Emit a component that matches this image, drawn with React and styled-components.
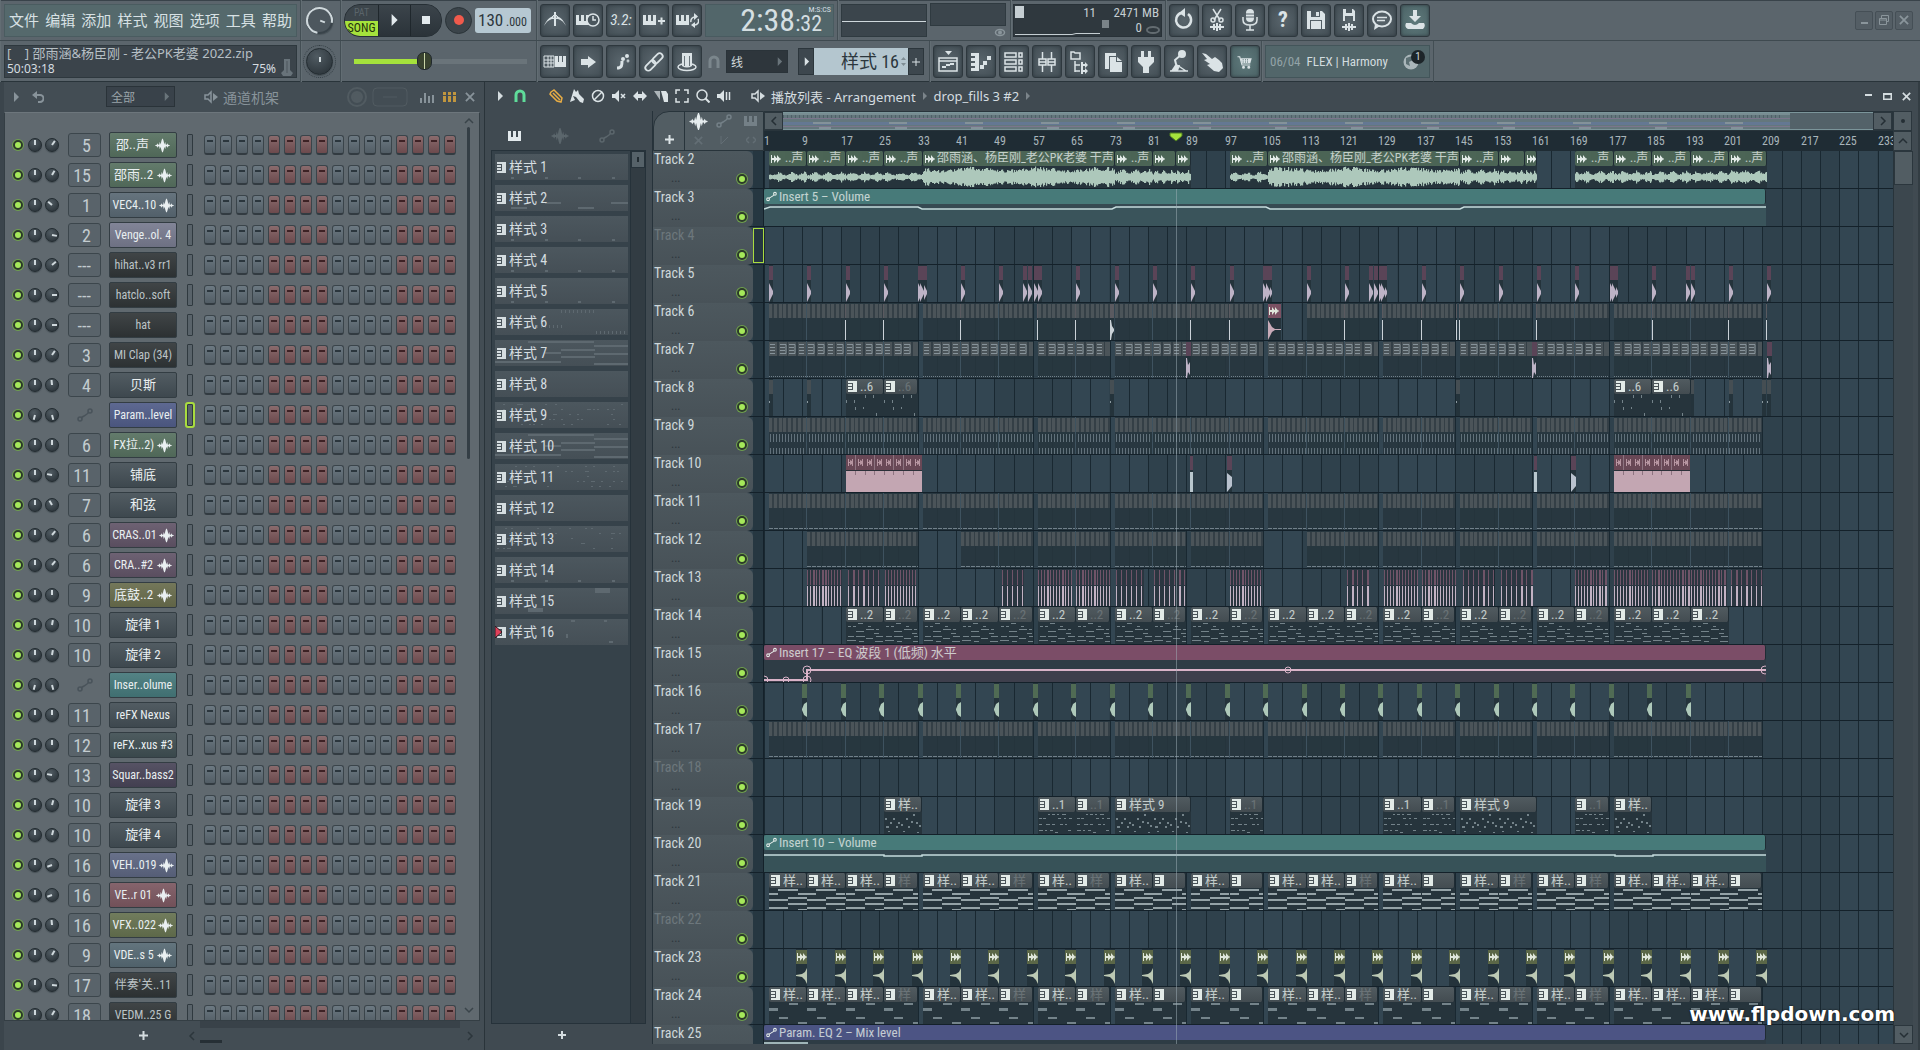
import React from "react";
import styled, { createGlobalStyle, css } from "styled-components";

const NARROW = '"Liberation Sans Narrow", "Roboto Condensed", Roboto, "Noto Sans CJK SC", sans-serif';
const SANS = '"Noto Sans", "Noto Sans CJK SC", sans-serif';

const Global = createGlobalStyle`
  * { box-sizing: border-box; }
  body { margin: 0; background: #3e484f; color: #cfd8dc; font-family: ${SANS}; font-size: 13px; overflow: hidden; }
  button, input, select { font: inherit; color: inherit; margin: 0; padding: 0; border: 0; background: none; border-radius: 0; }
  svg { display: block; flex: none; }
`;

/* ---------- icons ---------- */
const PIANO = "M0 0h3v6h2V0h3v6h2V0h3v10H0z";
const WAVE = "M0 5.4L2 5l1-2 1 2h1l1-4 1 3.500L8 0l1-3h1l1 3 1 4.500L13 1l1 4h1l1-2 1 2 2 .4v1.200L17 7l-1 2-1-2h-1l-1 4-1-3.500L11 12l-1 3H9l-1-3-1-4.500L6 11 5 7H4L3 9 2 7 0 6.600z";
const Svg = ({ w = 24, h = w, vb, children, ...p }) => (
  <svg width={w} height={h} viewBox={vb || `0 0 ${w} ${h}`} fill="none" stroke="currentColor" strokeWidth="2" aria-hidden="true" {...p}>{children}</svg>
);
const F = (p) => <path fill="currentColor" stroke="none" {...p} />;
const WaveIcon = ({ w = 18 }) => <Svg w={w} h={w} vb="0 -4 19 20"><F d={WAVE} /></Svg>;
const LineIcon = ({ w = 16 }) => (
  <Svg w={w} h={w} vb="0 0 16 16" strokeWidth="1.5"><circle cx="3" cy="12" r="2" /><circle cx="13" cy="4" r="2" /><path d="M4.500 10.500 7 9l3-2 1.500-1.500" /></Svg>
);
const PianoIcon = () => <Svg w={13} h={10}><F d={PIANO} /></Svg>;
const KeysIcon = ({ dim }) => (
  <Svg w={9} h={11} vb="0 0 9 11" style={{ opacity: dim ? 0.4 : 1 }}><F d="M5 0h4v11H5zM0 0h5v2H0zM0 3h4v2H0zM0 6h4v2H0zM0 9h5v2H0z" /></Svg>
);
const PLUG = "M0 0h1v3h2V0l2.500 3H6V0l3 3.500h1v1H9L6 8V5h-.5L3 8V5H1v3H0z";
const PlugIcon = () => <Svg w={10} h={8}><F d={PLUG} /></Svg>;
const Tri = ({ s = 8 }) => <Svg w={s} h={s + 2} vb="0 0 8 10"><F d="M2 0l5 5-5 5z" /></Svg>;
const Speaker = () => <Svg w={14} h={14} strokeWidth="1.500"><path d="M1 5h3l3-3v10L4 9H1z" /><F d="M9 3l5 4-5 4z" /></Svg>;
const Chevron = ({ d = "up" }) => (
  <Svg w={12} h={12} strokeWidth="1.500" style={{ rotate: { up: "0deg", down: "180deg", left: "-90deg", right: "90deg" }[d] }}><path d="M2 8l4-4 4 4" /></Svg>
);
const CloseX = ({ w = 11 }) => <Svg w={w} h={w} vb="0 0 11 11"><path d="M1 1l9 9M10 1l-9 9" /></Svg>;
const MagnetIcon = ({ w = 14 }) => <Svg w={w} h={w} vb="0 0 14 14" strokeWidth="3"><path d="M3 13V6a4 4 0 0 1 8 0v7" /></Svg>;

const ICONS = {
  metronome: <><F d="M1 18c3-7 6-9 10-10l-1 3c-3 0-6 2-9 7zM23 18c-3-7-6-9-10-10l1 3c3 0 6 2 9 7zM11 4h2v14h-2z" /><path d="M9 9l3-3 3 3-3 3z" strokeWidth="1" /></>,
  wait: <><F d={PIANO} transform="translate(0 7)" /><circle cx="17" cy="12" r="6" strokeWidth="1.500" fill="#4a565d" /><path d="M17 8v4h3" strokeWidth="1.500" /></>,
  pianoPlus: <><F d={PIANO} transform="translate(1 7)" /><path d="M16 13h7M19.500 9.500v7" /></>,
  pianoLoop: <><F d={PIANO} transform="translate(1 7)" /><path d="M16 14a4 4 0 0 1 4-5M23 11a4 4 0 0 1-4 6" strokeWidth="1.500" /><F d="M19 5l4 3.500-4 3.500zM20 14v6l-4-3z" /></>,
  typing: <><path d="M1 6h10v11H1zM1 10h10M1 13h10M5 6v11M8 6v11" strokeWidth="1" /><F d="M12 6h3v6h1V6h3v6h1V6h3v11H12z" /></>,
  arrow: <F d="M5 9h7V6l8 6-8 6v-3H5z" />,
  curve: <><path d="M8 18c5 0 5-3 5-7" strokeWidth="3" /><circle cx="18" cy="6" r="1" /><circle cx="14" cy="9" r="1" /><circle cx="19" cy="11" r=".4" /></>,
  link: <g transform="rotate(-45 12 12)" strokeWidth="1.800"><rect x="1" y="9" width="12" height="6" rx="3" /><rect x="11" y="9" width="12" height="6" rx="3" /></g>,
  hat: <><ellipse cx="12" cy="17" rx="9" ry="3.500" strokeWidth="1.500" /><F d="M7 3h10v13q-5 3-10 0z" /><path d="M9.500 6v10M14.500 6v10" stroke="#68747a" strokeWidth="1" /></>,
  undo: <><path d="M9 5a7.500 7.500 0 1 0 7 1" strokeWidth="2.500" /><F d="M13 0v9L7 5z" /></>,
  cut: <><path d="M8 1l7 11M16 1L9 12" strokeWidth="1.500" /><circle cx="8" cy="12" r="2" strokeWidth="1.500" /><circle cx="16" cy="12" r="2" strokeWidth="1.500" /><F d="M5 18h14v2H5zM8 16h2v6H8zM11 15h2v8h-2zM14 16h2v6h-2z" /></>,
  mic: <><rect x="8" y="1" width="8" height="13" rx="4" fill="currentColor" stroke="none" /><path d="M5 9v3q0 5 7 5t7-5V9M12 17v5M8 22h8" strokeWidth="1.500" /><path d="M8 6h8M8 9h8" stroke="#59656c" strokeWidth="1" /></>,
  save: <><F fillRule="evenodd" d="M3 3h15l3 3v15H3zM7 3v6h9V3zM6 12v9h12v-9z" /><F d="M12 4h3v4h-3zM7 13h10v8H7z" /></>,
  saveWave: <><F fillRule="evenodd" d="M6 1h10l2 2v10H6zM9 1v4h6V1zM8 8v5h8V8z" /><F d="M5 18h14v2H5zM8 16h2v6H8zM11 15h2v8h-2zM14 16h2v6h-2z" /></>,
  chat: <><ellipse cx="12" cy="11" rx="9" ry="7.500" /><path d="M7 9.500h10M7 12.500h8" strokeWidth="1.500" /><F d="M5 16l-1 6 6-4z" /></>,
  download: <F d="M10 2h4v6h4l-6 6-6-6h4zM3 15h5q4 4 8 0h5q2 3-1 6H5q-4-2-2-6z" />,
  playlist: <><F d="M9 1h7l-3.500 4z" /><path d="M3 8h18v13H3zM3 11h18" strokeWidth="1.500" /><F d="M6 16h4v2H6zM10 14h4v2h-4zM14 13h4v2h-4z" /></>,
  roll: <><F d="M2 3h8v18H2v-3h4v-2H2v-3h4v-2H2V8h4V6H2z" /><F d="M11 15h4v4h-4zM14 11h4v4h-4zM18 6h4v4h-4z" /></>,
  rack: <g strokeWidth="1.500"><path d="M3 3h11v4H3zM3 10h11v4H3zM3 17h11v4H3zM17 3h3v4h-3zM17 10h3v4h-3zM17 17h3v4h-3z" /></g>,
  mixer: <g strokeWidth="1.500"><path d="M7.500 2v7M7.500 15v7M16.500 2v7M16.500 15v7M4 9h7v6H4zM13 9h7v6h-7z" /><path d="M4 12h7M13 12h7" /></g>,
  tree: <><path d="M3 2h3l1 1h5v6H3zM7 11v11M7 15h5M7 21h5" strokeWidth="1.500" /><F d="M13 12h2v2h2v-2l3 3-3 3v-2h-2v2h-2zM13 18h2v2h2v-2l3 3-3 3v-2h-2v2h-2z" /></>,
  copy: <><F d="M4 3h11v3H8v13H4z" /><F d="M9 7h6v5h6v10H9zM16 7l5 4h-5z" /></>,
  plug: <F d="M7 1h3v6h4V1h3v6h3v5l-5 5v6H9v-6l-5-5V7h3z" />,
  arm: <><path d="M15 4L8 10l2 8" strokeWidth="2" /><circle cx="15" cy="4" r="3" fill="currentColor" /><path d="M3 21h18M10 15l9 6" strokeWidth="1.500" /><F d="M4 21l4-6h5l-2 6z" /></>,
  hand: <F d="M2 3l4 1 6 5 3-2 4 3 3 3 1 5-4 4-5-1-7-6 3-1-6-4 3-1z" />,
  cart: <><path d="M2 5h3l3 11h11" strokeWidth="1.500" /><F fillRule="evenodd" d="M6 7h15l-2 7H8zM9 8v2h1V8zM12 8v2h1V8zM15 8v2h1V8zM9 11v2h1v-2zM12 11v2h1v-2zM15 11v2h1v-2z" /><circle cx="10" cy="19" r="1" /><circle cx="17" cy="19" r="1" /></>,
};
const ToolGlyph = ({ n }) => <Svg w={n === "cart" ? 18 : 24} vb="0 0 24 24">{ICONS[n]}</Svg>;

/* ---------- toolbar ---------- */
const Shell = styled.div`display: flex; flex-direction: column; height: 100vh; overflow: hidden; position: relative;`;
const Toolbar = styled.header`background: #5b656c; box-shadow: inset 0 1px #39434a; border-bottom: 1px solid #29343a; height: 82px; flex: none;`;
const BarRow = styled.div`display: flex; height: 41px; border-bottom: 1px solid #3f4a50; &:last-child { border-bottom: 0; }`;
const Section = styled.div`
  display: flex; align-items: center; gap: 3px; padding: 0 0 0 ${(p) => p.$pad ?? 3}px; flex: none;
  width: ${(p) => p.$w}px; border-right: 1px solid #434e54; box-shadow: inset 1px 0 #626d73;
`;
const Plain = styled(Section)`border-right: 0; width: auto;`;
const MenuBar = styled.nav`
  width: 293px; height: 33px; display: flex; align-items: center; justify-content: space-between; padding: 0 4px;
  background: #55696c; border: 1px solid #4a5c60;
`;
const MenuItem = styled.button`font: 15px/30px "Noto Sans CJK SC", sans-serif; color: #d8e1e4;`;
const Info = styled.div`
  width: 293px; height: 33px; background: #3b444b; border: 1px solid #2e383e; padding: 0 4px 0 2px; color: #d6dde0;
  font: 12px/15px ${SANS}; position: relative;
  > svg { position: absolute; right: 3px; top: 13px; color: #68737a; }
`;
const InfoTop = styled.div`white-space: pre; color: #b6bfc4; font-size: 13px;`;
const InfoLow = styled.div`display: flex; justify-content: space-between; padding-right: 16px;`;

const KnobBox = styled.label`
  position: relative; display: block; flex: none; width: ${(p) => p.$s}px; height: ${(p) => p.$s}px; border-radius: 50%;
  background: radial-gradient(circle at 40% 30%, #505b62, #30393f 75%); border: 1px solid #222b30; box-shadow: 0 1px 1px #454f55;
  ${(p) => p.$dots && css`outline: 1px dotted #333d43; outline-offset: 2px;`}
  ${(p) => p.$ring && css`border: 2px solid #cfd8dc; border-bottom-color: #39434a; background: #4d575e; rotate: -35deg;`}
`;
const Needle = styled.i`
  position: absolute; left: 50%; top: 50%; width: 2px; height: 5px; margin: -5px 0 0 -1px; background: #cfd8dc; transform-origin: 50% 100%;
`;
const Hidden = styled.input`position: absolute; inset: 0; width: 100%; height: 100%; opacity: 0;`;
const Knob = ({ s = 14, a = 0, label, ring, dots }) => (
  <KnobBox $s={s} $ring={ring} $dots={dots}><Needle style={{ transform: `rotate(${a}deg)` }} /><Hidden type="range" aria-label={label} min="-150" max="150" defaultValue={a} /></KnobBox>
);
const Transport = styled.div`
  display: flex; width: 98px; height: 33px; border-radius: 16px; overflow: hidden; background: #30383e; border: 1px solid #262f35;
  button { display: grid; place-items: center; flex: 1; border-left: 1px solid #1f272c; background: linear-gradient(#3b444b, #2b3339); color: #e3eaed; }
`;
const Mode = styled.div`width: 33px; text-align: center;`;
const Pat = styled.div`color: #5a646a; font: 10px/16px ${NARROW}; background: #3c454b;`;
const Song = styled.div`background: #a5e23c; color: #23300c; font: 12px/15px ${NARROW};`;
const Record = styled.button`
  width: 27px; height: 27px; border-radius: 50%; background: #3b444a; border: 1px solid #2a3338; display: grid; place-items: center;
  &::after { content: ""; width: 10px; height: 10px; border-radius: 50%; background: #f05a4c; }
`;
const RecordButton = styled(Record)`border-radius: 50%; background: #3b444a; border: 1px solid #2a3338;`;
const Tempo = styled.label`
  width: 56px; height: 25px; border-radius: 3px; background: #b6c8d2; color: #2c363c; display: flex; align-items: baseline; padding-left: 3px; font: 12px/24px ${NARROW};
  input { width: 28px; font-size: 17px; }
`;
const IconButton = styled.button`
  width: 30px; height: 33px; flex: none; display: grid; place-items: center; color: #dbe3e6; border: 1px solid #2e383e; border-radius: 3px;
  background: ${(p) => (p.$hot ? "radial-gradient(#5f7a7c, #4a6164)" : "radial-gradient(#59656c, #414c53)")};
  box-shadow: inset 0 0 3px #2f3a40; font: italic 15px/30px ${NARROW};
`;
const Clock = styled.div`
  width: 129px; height: 33px; background: #52666a; border: 1px solid #495b60; display: flex; justify-content: flex-end; align-items: baseline;
  position: relative; padding-right: 11px; color: #d5dfe2; font: 32px/31px ${NARROW};
  small { font-size: 22px; }
  sup { position: absolute; right: 2px; top: 1px; font: 8px/8px ${NARROW}; color: #d5dfe2; }
`;
const Screen = styled.div`height: ${(p) => p.$h || 33}px; width: ${(p) => p.$w}px; background: #3b454c; border: 1px solid #2f3a40;`;
const SideScreen = styled.div`display: flex; flex-direction: column; align-items: flex-end; justify-content: space-between; height: 34px; color: #8a959b;`;
const Cpu = styled.div`
  width: 149px; height: 33px; background: #2f383e; border: 1px solid #283137; display: grid; grid-template-columns: 1fr 60px; color: #c5ced2; font: 13px/15px ${NARROW};
  text-align: right; position: relative; > span:nth-child(odd) { padding-right: 5px; } > span:nth-child(even) { padding-right: 2px; } > span:nth-child(4) { padding-right: 19px; }
  svg { position: absolute; left: 0; top: 0; }
`;
const Volume = styled.input`
  appearance: none; width: 173px; height: 20px; margin-left: 10px;
  &::-webkit-slider-runnable-track { height: 5px; background: linear-gradient(90deg, #a5e23c 41%, #6a747a 41%); }
  &::-webkit-slider-thumb { appearance: none; width: 15px; height: 18px; margin-top: -7px; border-radius: 7px; border: 1px solid #20282d; background: linear-gradient(90deg, #39432f 6px, #c9d6a8 6px, #c9d6a8 7px, #39432f 7px); }
`;
const Drop = styled.label`
  display: flex; align-items: center; justify-content: space-between; width: ${(p) => p.$w}px; height: ${(p) => p.$h}px; padding: 0 4px;
  background: ${(p) => p.$bg}; border: 1px solid #2a3339; color: #69747a;
  select { appearance: none; color: ${(p) => p.$c || "#d3dbde"}; flex: 1; min-width: 0; font: 12px/18px "Noto Sans CJK SC", sans-serif; }
`;
const SnapIcon = styled.span`color: #7b868c; padding: 0 2px;`;
const PatternBox = styled.div`display: flex; height: 27px; margin-left: 7px; button { width: 16px; background: #3d474e; border: 1px solid #2c363c; display: grid; place-items: center; color: #dbe3e6; }`;
const PatternName = styled.label`
  width: 94px; background: #b4c6cf; color: #2c373d; display: flex; align-items: center; justify-content: flex-end; gap: 2px; padding-right: 2px;
  font: 18px/26px ${NARROW}; input { width: 64px; text-align: right; }
`;
const News = styled.div`
  width: 165px; height: 33px; background: #52666a; border: 1px solid #43555a; display: flex; align-items: center; gap: 6px; padding: 0 4px; font: 13px/16px ${NARROW}; color: #93a3a7;
  a { color: #d2dcdf; text-decoration: none; flex: 1; white-space: nowrap; }
`;
const Globe = styled.span`
  position: relative; width: 22px; height: 24px; color: #aab6ba; svg { position: absolute; left: 0; top: 4px; }
  b { position: absolute; right: 0; top: 0; width: 14px; height: 14px; border-radius: 50%; background: #1d2529; color: #cfd8dc; font: 11px/14px ${NARROW}; text-align: center; }
`;
const WinButtons = styled.div`
  margin-left: auto; display: flex; gap: 2px; align-items: center; padding-right: 7px;
  button { width: 18px; height: 19px; border: 1px solid #454f56; border-radius: 2px; background: #545e65; color: #8a959b; display: grid; place-items: center; }
`;
const Help = styled.b`font: bold 22px/28px ${NARROW};`;
const Spin = () => <Svg w={5} h={9}><F d="M0 3L2.500 0 5 3zM0 6l2.500 3L5 6z" opacity=".4" /></Svg>;

const tools = (list) => list.map((n) => (
  <IconButton key={n} aria-label={n} $hot={n === "download" || n === "cart"}>
    {n === "count" ? "3.2:" : n === "?" ? <Help>?</Help> : <ToolGlyph n={n} />}
  </IconButton>
));

const Top = () => (
  <Toolbar>
    <BarRow>
      <Section $w={301} $pad={4}>
        <MenuBar>{["文件", "编辑", "添加", "样式", "视图", "选项", "工具", "帮助"].map((t) => <MenuItem key={t}>{t}</MenuItem>)}</MenuBar>
      </Section>
      <Section $w={40} $pad={5}><Knob s={27} a={145} ring label="主音量" /></Section>
      <Section $w={196}>
        <Transport>
          <Mode><Pat>PAT</Pat><Song>SONG</Song></Mode>
          <button aria-label="播放"><Tri s={10} /></button>
          <button aria-label="停止"><Svg w={8} h={8}><F d="M0 0h8v8H0z" /></Svg></button>
        </Transport>
        <RecordButton aria-label="录音" />
        <Tempo><input aria-label="速度" defaultValue="130" /><span>.000</span></Tempo>
      </Section>
      <Section $w={301}>
        {tools(["metronome", "wait", "count", "pianoPlus", "pianoLoop"])}
        <Clock><span>2:38</span><small>:32</small><sup>M:S:CS</sup></Clock>
      </Section>
      <Section $w={173}>
        <Screen $w={86}><Svg w={84} h={31} strokeWidth="1"><path d="M0 16.500h84" /></Svg></Screen>
        <SideScreen><Screen $w={76} $h={23} /><Svg w={12} h={9}><ellipse cx="6" cy="4.500" rx="4.500" ry="3" strokeWidth="1.500" /><circle cx="6" cy="4.500" r="1" /></Svg></SideScreen>
      </Section>
      <Section $w={155} $pad={2}>
        <Cpu>
          <span>11</span><span>2471 MB</span><span /><span>0</span>
          <Svg w={147} h={31} strokeWidth="1"><F d="M1 1h9v12H1z" /><path d="M1 29.500h57l4-1h24" /><F d="M88 15h7v8h-7z" opacity=".5" /><ellipse cx="139" cy="25" rx="6" ry="3" opacity=".35" strokeWidth="2" /></Svg>
        </Cpu>
      </Section>
      <Plain>{tools(["undo", "cut", "mic", "?", "save", "saveWave", "chat", "download"])}</Plain>
      <WinButtons>
        <button aria-label="最小化"><Svg w={9} h={9}><path d="M1 7h7" /></Svg></button>
        <button aria-label="还原"><Svg w={10} h={10} strokeWidth="1"><path d="M2.500 3V.5h7v6H8M.5 3.500h7v6h-7zM.5 5h7" /></Svg></button>
        <button aria-label="关闭"><CloseX w={10} /></button>
      </WinButtons>
    </BarRow>
    <BarRow>
      <Section $w={301} $pad={4}>
        <Info>
          <InfoTop>{"[    ] 邵雨涵&杨臣刚 - 老公PK老婆 2022.zip"}</InfoTop><InfoLow><span>50:03:18</span><span>75%</span></InfoLow>
          <Svg w={12} h={17}><F d="M3 0h6v11l3 3-2 3H2l-2-3 3-3z" /><path d="M6 2v12" stroke="#4c565d" strokeWidth="1" /></Svg>
        </Info>
      </Section>
      <Section $w={40} $pad={5}><Knob s={27} a={0} dots label="主音高" /></Section>
      <Section $w={196}><Volume type="range" aria-label="音高" defaultValue="40" /></Section>
      <Section $w={393}>
        {tools(["typing", "arrow", "curve", "link", "hat"])}
        <SnapIcon><MagnetIcon /></SnapIcon>
        <Drop $w={62} $h={23} $bg="#2e363c"><select aria-label="对齐"><option>线</option></select><Tri s={7} /></Drop>
        <PatternBox>
          <button aria-label="样式菜单"><Tri s={7} /></button>
          <PatternName><input aria-label="样式" defaultValue="样式 16" /><Spin /></PatternName>
          <button aria-label="添加样式"><Svg w={8} h={8}><path d="M4 0v8M0 4h8" strokeWidth="1" /></Svg></button>
        </PatternBox>
      </Section>
      <Section $w={332}>{tools(["playlist", "roll", "rack", "mixer", "tree", "copy", "plug", "arm", "hand", "cart"])}</Section>
      <Section $w={172}>
        <News>
          <span>06/04</span><a href="#news">FLEX | Harmony</a>
          <Globe><Svg w={16} h={16}><circle cx="8" cy="8" r="7.500" fill="currentColor" stroke="none" /><path d="M3 4l6-2 1 4-4 2 1 4-4-2z" fill="#5c6f73" stroke="none" /></Svg><b>1</b></Globe>
        </News>
      </Section>
    </BarRow>
  </Toolbar>
);

/* ---------- channel rack ---------- */
const Work = styled.main`flex: 1; min-height: 0; display: flex;`;
const Rack = styled.section`width: 485px; flex: none; display: flex; flex-direction: column; background: #434d54; border-left: 4px solid #3b454c; border-right: 1px solid #2a343a; padding-right: 4px;`;
const Title = styled.div`height: 30px; flex: none; display: flex; align-items: center; color: #88939a; font-size: 13px; padding-bottom: 1px;`;
const RackName = styled.span`margin: 0 auto 0 5px; font-size: 14px;`;
const Ghost = styled.button`display: grid; place-items: center; width: ${(p) => p.$w || 20}px; height: 22px; flex: none; color: ${(p) => p.$c || "inherit"};`;
const Space = styled.span`width: ${(p) => p.$w}px; flex: ${(p) => (p.$w ? "none" : 1)};`;
const RackBody = styled.div`flex: 1; min-height: 0; display: flex; background: #60696f; border: 1px solid #343e44; border-top-color: #6d767c;`;
const Rows = styled.div`flex: 1; overflow: hidden; padding-top: 17px;`;
const Channel = styled.div`display: flex; align-items: center; height: 30px; padding-left: 8px;`;
const Led = styled.input.attrs({ type: "checkbox", defaultChecked: true })`
  appearance: none; width: 10px; height: 10px; flex: none; border-radius: 50%; border: 2px solid #2c3a2a; background: #a5e85a; box-shadow: 0 0 0 1px #6fa04e; margin: 0 5px 0 0;
`;
const Knobs = styled.div`display: flex; gap: 3px; width: 40px;`;
const Route = styled.input`
  width: 33px; height: 24px; border: 1px solid #3c464c; border-radius: 3px; background: #59636a; text-align: right; padding-right: 9px; color: #c3ccd0; font: 18px/22px ${NARROW};
`;
const AutoSlot = styled.span`width: 33px; display: grid; place-items: center; color: #49535a;`;
const Name = styled.button`
  width: 68px; height: 26px; margin: 0 10px 0 8px; border: 1px solid #333d43; border-radius: 2px; overflow: hidden; white-space: nowrap;
  background: ${(p) => p.$c}; background-image: linear-gradient(#ffffff14, #00000014); color: ${(p) => (p.$dark ? "#bcc4c7" : "#e9eff1")};
  display: flex; align-items: center; justify-content: ${(p) => (p.$wave ? "space-evenly" : "center")}; font: ${(p) => (p.$cjk ? 13 : 12)}px/24px ${NARROW};
`;
const Marker = styled.span`width: 6px; height: 22px; margin-right: 11px; border: 1px solid #2f393f; border-radius: 1px; background: #59636a; flex: none; outline: ${(p) => (p.$on ? "2px solid #a9dc3f" : "0")};`;
const Steps = styled.div`display: grid; grid-template-columns: repeat(16, 12px); gap: 4px;`;
const Step = styled.input.attrs({ type: "checkbox" })`
  appearance: none; height: 20px; border: 1px solid #3a444a; border-bottom: 2px solid #323b41; border-radius: 3px;
  background: linear-gradient(${(p) => (p.$red ? "#3d2225,#3d2225" : "#2b363d,#2b363d")}) 50% 4px / 6px 2px no-repeat,
    linear-gradient(${(p) => (p.$red ? "#8a6b6d, #6c4a4d" : "#6c7982, #525d65")});
`;
const VBar = styled.div`width: 21px; display: flex; flex-direction: column; align-items: center; color: #3a444a; padding: 2px 0 4px; &::before { content: ""; order: 1; width: 3px; height: 332px; background: #343e45; border-radius: 2px; } button:last-child { order: 2; margin-top: auto; }`;
const RackFoot = styled.div`height: 29px; flex: none; display: flex; align-items: center; color: #2c363c; padding-left: 129px;`;
const HTrack = styled.div`flex: 1; height: 29px; border-top: 7px solid #394249; &::after { content: ""; display: block; width: 22px; height: 3px; margin-top: 12px; background: #262f35; }`;

const G = "#56705f", D = "#303537", B = "#434e55";
const CH = [
  ["邵..声", 5, G, 1, 35], ["邵雨..2", 15, G, 1, 30], ["VEC4..10", 1, "#596873", 1, -50], ["Venge..ol. 4", 2, "#777a8e", 0, 100],
  ["hihat..v3 rr1", "---", D, 0, 50], ["hatclo..soft", "---", D, 0, 90], ["hat", "---", D, 0, 90], ["MI Clap (34)", 3, D, 0, 35],
  ["贝斯", 4, B, 0, -5], ["Param..level", 0, "#505c88", 0, 165], ["FX拉..2)", 6, G, 1, 0], ["铺底", 11, B, 0, -80], ["和弦", 7, B, 0, -30],
  ["CRAS..01", 6, "#615467", 1, 40], ["CRA..#2", 6, "#615467", 1, 40], ["底鼓..2", 9, "#686c4c", 1, 0], ["旋律 1", 10, B, 0, 10], ["旋律 2", 10, B, 0, 10],
  ["Inser..olume", 0, "#45787a", 0, 165], ["reFX Nexus", 11, B, 0, 0], ["reFX..xus #3", 12, "#3f4e52", 0, 0], ["Squar..bass2", 13, "#484457", 0, -80],
  ["旋律 3", 10, B, 0, 15], ["旋律 4", 10, B, 0, 15], ["VEH..019", 16, "#5c6580", 1, -110], ["VE..r 01", 16, "#7b5760", 1, -110],
  ["VFX..022", 16, "#65714f", 1, -5], ["VDE..s 5", 9, "#566973", 1, 30], ["伴奏'关..11", 17, D, 0, 95], ["VEDM..25 G", 18, D, 0, 30],
];

const ChannelRack = () => (
  <Rack>
    <Title>
      <Ghost $w={24} aria-label="菜单"><Tri /></Ghost>
      <Ghost aria-label="撤消"><Svg w={12} h={12}><path d="M4 4h4a3 3 0 0 1 0 7H6" /><F d="M0 4l5-4v8z" /></Svg></Ghost>
      <Space $w={58} />
      <Drop $w={69} $h={21} $bg="#39424a" $c="#9aa4a9"><select aria-label="筛选"><option>全部</option></select><Tri s={7} /></Drop>
      <Space $w={29} />
      <Speaker />
      <RackName>通道机架</RackName>
      <Ghost $w={29} $c="#515b61" aria-label="摇摆"><Svg w={20}><circle cx="10" cy="10" r="9" /><circle cx="10" cy="10" r="5" fill="currentColor" /></Svg></Ghost>
      <Ghost $w={38} $c="#515b61" aria-label="步数"><Svg w={36} h={20} strokeWidth="1"><rect x="1" y="1" width="34" height="18" rx="4" /><path d="M11 10h14" /></Svg></Ghost>
      <Space $w={4} />
      <Ghost $w={27} aria-label="图表"><Svg w={14} h={12}><path d="M1 12V7M5 12V2M9 12V5M13 12V4" /></Svg></Ghost>
      <Ghost $w={19} $c="#c0963f" aria-label="步进"><Svg w={13} h={10}><F d="M0 0h3v10H0zM5 0h3v10H5zM10 0h3v10h-3z" /><path d="M0 3.500h13" stroke="#434d54" strokeWidth="1" /></Svg></Ghost>
      <Ghost $w={21} aria-label="关闭"><CloseX w={10} /></Ghost>
    </Title>
    <RackBody>
      <Rows>
        {CH.map(([n, r, c, w, a], i) => (
          <Channel key={i}>
            <Led aria-label={`启用 ${n}`} />
            <Knobs><Knob a={r ? 0 : -165} label={`声相 ${n}`} /><Knob a={a} label={`音量 ${n}`} /></Knobs>
            {r ? <Route aria-label={`混音器 ${n}`} defaultValue={r} /> : <AutoSlot><LineIcon /></AutoSlot>}
            <Name $c={c} $wave={w} $dark={c === D} $cjk={/[\u4e00-\u9fff]/.test(n) && n.length < 7}>{n}{w ? <WaveIcon w={15} /> : null}</Name>
            <Marker $on={i === 9} />
            <Steps>{Array.from({ length: 16 }, (_, k) => <Step key={k} aria-label={`${n} 步 ${k + 1}`} $red={(k >> 2) % 2} />)}</Steps>
          </Channel>
        ))}
      </Rows>
      <VBar><button aria-label="上"><Chevron /></button><button aria-label="下"><Chevron d="down" /></button></VBar>
    </RackBody>
    <RackFoot>
      <Ghost $c="#d5dde0" aria-label="添加通道"><Svg w={9} h={9}><path d="M4.500 0v9M0 4.500h9" /></Svg></Ghost>
      <Space $w={30} />
      <Ghost $w={17} aria-label="左"><Chevron d="left" /></Ghost>
      <HTrack />
      <Ghost aria-label="右"><Chevron d="right" /></Ghost>
    </RackFoot>
  </Rack>
);

/* ---------- picker ---------- */
const Playlist = styled.section`flex: 1; min-width: 0; display: flex; flex-direction: column; background: #404a51; border-right: 2px solid #333d43; padding: 0 5px 6px 0;`;
const PlTitle = styled(Title)`color: #d5dde0; height: 29px; padding-left: 7px; margin-right: -3px;`;
const Tools = styled.div`display: flex; gap: 1px; margin: 0 17px 0 14px; width: 188px;`;
const Crumb = styled.span`margin: 0 7px 0 6px;`;
const Split = styled.div`flex: 1; min-height: 0; display: flex;`;
const Picker = styled.aside`width: 167px; flex: none; padding: 0 6px 0 6px; display: flex; flex-direction: column;`;
const Tabs = styled.div`height: 39px; padding: 14px 0 0; display: flex; button:nth-child(n + 2) { color: #5b666c; }`;
const PickBox = styled.div`flex: 1; min-height: 0; display: flex; border: 1px solid #26323a; background: #36424a; color: #d5dde0;`;
const PickList = styled.div`flex: 1; display: flex; flex-direction: column; gap: 5px; padding: 3px 2px 0 3px;`;
const PickItem = styled.button`
  position: relative; height: 26px; flex: none; background: linear-gradient(#4c575e, #454f56); display: flex; align-items: center; gap: 3px; padding-left: 2px; overflow: hidden;
  font: 14px/26px ${NARROW};
  > svg:first-child { position: absolute; left: 0; top: 0; color: #5e6970; }
  > * { position: relative; }
`;
const Current = styled.i`position: absolute !important; left: 0; top: 7px;`;
const PickScroll = styled.div`width: 15px; border-left: 1px solid #26323a; background: #323c43; &::before { content: ""; display: block; height: 15px; background: linear-gradient(#222c32, #222c32) 50% 50% / 2px 5px no-repeat #566269; border: 1px solid #26323a; }`;
const PickFoot = styled.div`height: 20px; display: grid; place-items: center; margin-left: -13px; color: #d5dde0;`;

const rng = (seed) => () => ((seed = (seed * 16807) % 2147483647) / 2147483647);
const pickArt = (n) => {
  const r = rng(n * 991 + 7);
  if (n === 7 || n === 10) return "M33 1h66v2H33zM50 12h16v2H50zM66 9h34v2H66zM66 16h34v2H66zM0 21h66v2H0zM99 5h34v2H99zM99 13h34v2H99zM99 23h34v2H99z";
  if (n === 2) return "M16 22h16v2H16zM50 17h16v2H50zM83 22h16v2H83zM116 17h17v2h-17z";
  if (n === 15) return "M33 20h15v4H33zM100 0h15v5h-15z";
  if (n === 6) return Array.from({ length: 9 }, (_, i) => `M${66 + i * 4} 1h1v3h-1zM${101 + i * 4} 22h1v3h-1zM${34 + i * 4} 16h1v3h-1z`).join("");
  if ([9, 11, 13].includes(n)) return Array.from({ length: 40 }, () => `M${Math.floor(r() * 64) * 2} ${2 + Math.floor(r() * 5) * 5}h2v1h-2z`).join("");
  if ([8, 12].includes(n)) return "";
  if (n === 16) return "M76 1h4v2h-4zM109 1h3v2h-3zM71 15h2v4h-2zM114 22h4v2h-4z";
  return [16, 50, 83, 117].map((x) => `M${x} 23h3v2h-3z`).join("");
};

/* ---------- timeline ---------- */
const Arr = styled.div`flex: 1; min-width: 0; display: flex; flex-direction: column; position: relative; border-left: 1px solid #26323a;`;
const ArrTop = styled.div`height: 40px; flex: none; display: grid; grid-template-columns: 111px 1fr 20px; background: #404a51;`;
const Corner = styled.div`display: grid; grid-template-columns: 30px 80px; background: #525d63; border: 1px solid #28343b; border-radius: 16px 0 0 0; color: #dde5e8; padding-top: 0; align-items: end;`;
const CornerGrid = styled.div`display: grid; height: 38px; grid-template-columns: repeat(3, 1fr); grid-template-rows: 18px 20px; place-items: center; border-left: 1px solid #28343b; color: #748087; button { height: 18px; } button:first-child { color: #e6edef; } button:nth-child(n + 4) { opacity: .5; }`;
const Head = styled.div`display: flex; flex-direction: column; min-width: 0;`;
const MapRow = styled.div`display: flex; height: 20px; border: 1px solid #28343b; border-left: 0; background: #536269;`;
const Sq = styled.button`width: 19px; height: ${(p) => p.$h || 18}px; flex: none; background: #525d63; border: 1px solid #2b363d; color: #252f35; display: grid; place-items: center;`;
const MiniMap = styled.div`flex: 1; min-width: 0; overflow: hidden; border-top: 1px solid #7b959a; border-bottom: 1px solid #7b959a;`;
const Ruler = styled.div`height: 20px; background: #1f2c34; position: relative; overflow: hidden; color: #a9b5ba; font: 12px/20px ${NARROW}; span { position: absolute; top: 0; } svg { position: absolute; left: 405px; top: 1px; }`;
const ArrBody = styled.div`flex: 1; min-height: 0; display: flex;`;
const Tracks = styled.div`flex: 1; min-width: 0; overflow: hidden; position: relative; background: #2f414c;`;
const GridArt = styled.svg`position: absolute; left: 111px; top: 0;`;
const Track = styled.div`display: grid; grid-template-columns: 100px 11px 1fr; height: 38px; position: relative; border-bottom: 1px solid #14212a;`;
const TrackHead = styled.div`
  background: linear-gradient(#4d585e, #485258); border-radius: 0 6px 6px 0; padding: 0 1px; position: relative; font: 14px/17px ${NARROW}; color: ${(p) => (p.$off ? "#6d777c" : "#ced7da")};
  margin-bottom: -1px;
  ${Led} { position: absolute; right: 6px; top: 23px; margin: 0; }
  &::after { content: "..."; position: absolute; left: 18px; top: 20px; color: #2c363c; font-size: 12px; line-height: 14px; }
`;
const Gap = styled.div`background: #263741; border-right: 1px solid #14212a; ${(p) => p.$sel && css`border: 1px solid #a9dc3f; margin: 1px 0;`}`;
const Lane = styled.div`position: relative; overflow: hidden;`;
const Clip = styled.div`position: absolute; top: 0; height: 37px; overflow: hidden; background: ${(p) => p.$bg || "#26343c"};`;
const ClipHead = styled.div`
  height: 15px; display: flex; align-items: center; gap: ${(p) => p.$gap || 3}px; padding-left: 2px; overflow: hidden; white-space: nowrap; background: ${(p) => p.$c};
  color: #e3ebe8; font: ${(p) => p.$fs || 13}px/15px ${NARROW}; border-radius: 2px; border-right: 1px solid #1f2c34;
`;
const Txt = styled.span`opacity: ${(p) => (p.$dim ? 0.2 : 0.8)};`;
const PlayLine = styled.div`position: absolute; left: 523px; top: 38px; bottom: 0; width: 1px; background: #9fb0b880;`;
const VScroll = styled.div`width: 20px; display: flex; flex-direction: column; justify-content: space-between; background: #3c474e; border-left: 1px solid #28343b;`;
const Mark = styled.div`position: absolute; right: 25px; bottom: 22px; font: bold 20px/28px "DejaVu Sans", sans-serif; color: #fff; text-shadow: 0 0 2px #000;`;

const ux = (k) => Math.round(5 + 38.4 * k);
const pos = (x, w) => ({ left: x, width: w });

const wavePath = (w, mid, ampAt, seed) => {
  const r = rng(seed);
  let t = "";
  for (let x = 0; x < w; x++) { const a = ampAt(x / w) * (0.55 + 0.45 * r()); t += `M${x} ${(mid - a).toFixed(1)}h1.2v${(2 * a).toFixed(1)}h-1.2z`; }
  return t;
};
const AudioClip = ({ a, b, text, amp = 5, seed }) => {
  const x = ux(a), w = ux(b) - x;
  return (
    <Clip style={pos(x, w)}>
      <ClipHead $c="#4c6556" $fs={12} $gap={text && text.length < 4 ? 4 : 2}><PlugIcon />{text && <Txt>{text}</Txt>}</ClipHead>
      <svg width={w} height="22"><path fill="#adc8bb" d={wavePath(w, 11, (t) => amp + Math.sin(t * 19 + seed) * 1.5, seed)} /></svg>
    </Clip>
  );
};
const AutoClip = ({ text, c, body, line, children }) => (
  <Clip style={pos(0, 1002)} $bg={body}>
    <ClipHead $c={c} $gap={2}><LineIcon w={11} /><Txt>{text}</Txt></ClipHead>
    <svg width="1002" height="22" fill="none"><path d={`${line} V22 H0z`} fill={c} opacity=".22" /><path d={line} stroke="#c5dcdd" strokeWidth="1.500" />{children}</svg>
  </Clip>
);

const SECT = [[0, 4], [4, 7], [7, 9], [9, 13], [13, 16], [16, 18], [18, 20], [20, 22], [22, 26]];
const Stripes = ({ a, b, kind, pitch = 4.8 }) => {
  const x = ux(a), w = ux(b) - x - 5;
  let head = "", ticks = "";
  for (let i = 0; i * pitch < w - 2; i++) head += `M${Math.round(i * pitch)} 1h${Math.round(pitch) - 2}v14h-${Math.round(pitch) - 2}z`;
  if (kind === "ticks") for (let i = 1; i < w; i += 3) ticks += `M${i} 17h1v8h-1zM${i} 31h1v6h-1z`;
  if (kind === "dots") for (let i = 0; i < w; i += 2) ticks += `M${i} 35h1v1h-1z`;
  if (kind === "dash") for (let i = 0; i < w; i += 5) ticks += `M${i} 35h4v1h-4z`;
  const keys = [];
  if (kind === "dots") for (let i = 0; i * 9.6 < w - 9; i++) keys.push(<path key={i} transform={`translate(${Math.round(i * 9.6) + 1} 3)`} d={i % 3 ? "M0 .5h6v9H0M0 3.500h5M0 6.500h5" : "M0 .5h5M0 3.500h5M0 6.500h5M0 9.500h5"} stroke="#87939a" fill="none" />);
  return (
    <Clip style={pos(x, w)} $bg="#27353ee0">
      <svg width={w} height="37"><path fill="#343f46" d={`M0 1h${w}v14H0z`} /><path fill="#4b5459" d={head} /><path fill="#71808a" d={ticks} opacity={kind === "ticks" ? 0.8 : 1} />{keys}
        {Array.from({ length: Math.ceil(b - a) - 1 }, (_, i) => <path key={i} fill="#3e525f" d={`M${ux(a + i + 1) - x - 1} 0h1v37h-1z`} />)}
      </svg>
    </Clip>
  );
};

const NOTES = {
  chords: "M0 5h9v2H0zM9 1h20v2H9zM0 11h19v2H0zM19 9h20v2H19zM0 19h19v2H0zM19 15h19v2H19zM29 5h9v2h-9zM29 21h9v2h-9z",
  melody: "M2 4h3v1H2zM7 4h3v1H7zM22 4h3v1h-3zM12 1h5v1h-5zM20 7h8v1h-8zM30 7h3v1h-3zM10 9h8v1h-8zM28 11h5v1h-5zM2 14h6v1H2zM10 14h9v1h-9zM30 14h7v1h-7zM20 16h7v1h-7zM1 18h9v1H1zM29 19h8v1h-8zM13 19h5v1h-5z",
  lead: "M10 2h2v1h-2zM14 2h3v1h-3zM19 2h2v1h-2zM24 2h4v1h-4zM1 6h3v1H1zM5 6h3v1H5zM20 6h3v1h-3zM26 6h2v1h-2zM31 6h3v1h-3zM1 12h3v1H1zM8 12h4v1H8zM14 12h3v1h-3zM22 12h3v1h-3zM27 12h2v1h-2zM1 18h4v1H1zM7 18h2v1H7zM12 18h3v1h-3zM30 18h3v1h-3zM17 20h3v1h-3z",
  bass: "M0 6h9v3H0zM20 1h9v2h-9zM10 15h9v2h-9zM29 20h9v2h-9z",
  dots: "M0 6h1v3H0zM8 6h1v3H8zM9 13h1v3H9zM17 13h1v2h-1zM19 1h1v3h-1zM27 1h1v3h-1zM30 19h1v3h-1z",
  arp: "M1 6h2v2H1zM9 6h2v2H9zM6 10h2v2H6zM14 10h2v2h-2zM2 14h3v2H2zM12 14h2v2h-2zM17 12h2v2h-2zM22 6h2v2h-2zM29 2h2v2h-2zM27 9h2v2h-2zM24 14h2v2h-2zM32 10h2v2h-2zM35 13h2v2h-2zM4 19h2v1H4zM19 19h2v1h-2zM33 20h2v1h-2z",
};
const MidiClip = ({ a, b, text, dim, art, cut = 0, light }) => {
  const x = ux(a), w = ux(b) - x - cut;
  return (
    <Clip style={pos(x, w)}>
      <ClipHead $c="linear-gradient(#515b60, #434c51)"><KeysIcon />{text && <Txt $dim={dim}>{text}</Txt>}</ClipHead>
      <svg width={w} height="22" fill={light ? "#94a2a7" : "#74838a"}>
        {Array.from({ length: Math.ceil(b - a) }, (_, i) => <path key={i} d={NOTES[art]} transform={`translate(${i * 38} 0)`} />)}
      </svg>
    </Clip>
  );
};
const Hit = ({ x, w = 4, c = "#5a4457", f = "#bdb3c6", shape, icon }) => (
  <Clip style={pos(x, w)} $bg="#24333b">
    <svg width={w} height="37"><path fill={c} d={`M0 1h${w}v14H0z`} /><path fill={f} d={shape} />{icon && <path fill="#dfe6da" transform="translate(1 4)" d={PLUG} />}</svg>
  </Clip>
);
const Bursts = ({ a, w, step, seed = 3 }) => {
  const r = rng(seed * 77 + 5);
  let top = "", low = "";
  for (let i = 0; i < w; i += step) { const ww = r() > 0.85 ? 2 : 1; top += `M${i} 1h${ww}v15h-${ww}z`; low += `M${i} 17h${ww}v20h-${ww}z`; }
  return <Clip style={pos(a, w)} $bg="#2a3640"><svg width={w} height="37"><path fill="#6f5468" d={top} /><path fill="#c2b2c3" d={low} /></svg></Clip>;
};
const Pink = ({ a }) => (
  <Clip style={pos(a, 76)} $bg="#c3a6b2">
    <svg width="76" height="37">
      {Array.from({ length: 8 }, (_, i) => <g key={i} transform={`translate(${Math.round(i * 9.6)} 0)`}><path fill="#694856" d="M0 0h9v15H0z" /><path fill="#b795a1" d="M2 4h1v3h1V5l2 1V4h1v7H6V9l-2 1V8H3v3H2z" /><path fill="#8d7380" d="M9 0h1v20H9z" /></g>)}
      <path fill="#2a3038" d="M0 15h76v1H0z" />
    </svg>
  </Clip>
);

const LONG = "邵雨涵、杨臣刚_老公PK老婆 干声";
const sectionClips = (fn, from = 0, to = 26, cuts = [4, 7, 9, 11, 13, 16, 18, 20, 22, 26]) =>
  Array.from({ length: to - from }, (_, i) => fn(from + i, cuts.includes(from + i + 1)));
const px = (abs) => abs - 764;

const lanes = {
  2: () => <>
    {[0, 1, 2, 3].map((k) => <AudioClip key={k} a={k} b={k + 1} text="..声" amp={4} seed={k + 3} />)}
    <AudioClip a={4} b={9} text={LONG} amp={9} seed={9} /><AudioClip a={9} b={10} text="..声" amp={7} seed={4} />
    <AudioClip a={10} b={10.6} amp={6} seed={5} /><AudioClip a={10.6} b={11} amp={6} seed={6} />
    <AudioClip a={12} b={13} text="..声" amp={4} seed={12} /><AudioClip a={13} b={18} text={LONG} amp={9} seed={19} />
    <AudioClip a={18} b={19} text="..声" amp={7} seed={4} /><AudioClip a={19} b={19.7} amp={6} seed={5} /><AudioClip a={19.7} b={20} amp={6} seed={6} />
    {[21, 22, 23, 24, 25].map((k) => <AudioClip key={k} a={k} b={k + 1} text="..声" amp={k > 24 ? 6 : 5} seed={k} />)}
  </>,
  3: () => <AutoClip text="Insert 5 – Volume" c="#477a79" body="#364a52" line="M0 5l6-2h148l4 2h190l4-2h150l4 2h190l4-2h302" />,
  5: () => [...Array.from({ length: 27 }, (_, k) => ux(k)), px(918), px(920), px(1023), px(1028), px(1034), px(1263), px(1266), px(1369), px(1374), px(1379), px(1381), px(1610), px(1612), px(1686)]
    .map((x) => <Hit key={x} x={x} shape="M0 18l4 8v3l-4 8z" />),
  6: () => <>
    {[...SECT.slice(0, 4), [14, 16], ...SECT.slice(5)].map(([a, b]) => <Stripes key={a} a={a} b={b} kind="none" />)}
    {[845, 883, 960, 1037, 1075, 1110, 1190, 1229, 1344, 1382, 1421, 1456, 1459, 1536, 1652, 1728, 1766].map((x) => <Hit key={x} x={px(x)} w={x === 1110 ? 4 : 1} c="#5a5a60" f="#cbd2d8" shape="M0 17h1l1 6 2 3v2l-2 3-1 6H0z" />)}
    <Hit x={px(1268)} w={13} c="#7b5163" f="#c8abb8" icon shape="M0 17l4 7 3 2h6v1H7l-3 2-4 8z" />
  </>,
  7: () => <>{SECT.map(([a, b]) => <Stripes key={a} a={a} b={b} kind="dots" pitch={9.6} />)}{[1186, 1532, 1767].map((x) => <Hit key={x} x={px(x)} w={5} shape="M0 17h1l1 7 2-3v13l-2-3-1 6H0z" />)}</>,
  8: () => <>
    {[769, 807, 1110, 1456, 1690, 1729, 1762, 1767].map((x) => <Hit key={x} x={px(x)} w={4} c="#454e53" f="#8b999f" shape="M0 22h1v2H0z" />)}
    {[2, 3, 22, 23].map((k) => <MidiClip key={k} a={k} b={k + 1} cut={k === 3 ? 5 : 0} text="..6" dim={k === 3} art="dots" />)}
  </>,
  9: () => SECT.map(([a, b]) => <Stripes key={a} a={a} b={b} kind="ticks" />),
  10: () => <><Pink a={px(846)} /><Pink a={px(1614)} />{[1190, 1534].map((x) => <Hit key={x} x={px(x)} w={3} f="#b9c7ce" shape="M0 17h3v20H0z" />)}{[1227, 1571].map((x) => <Hit key={x} x={px(x)} w={5} f="#b9c2ce" shape="M0 18l5 4v9l-5 6z" />)}</>,
  11: () => SECT.map(([a, b]) => <Stripes key={a} a={a} b={b} kind="dash" />),
  12: () => [[1, 4], [5, 7], [7, 9], [9, 11], [11, 13], [14, 16], ...SECT.slice(5)].map(([a, b]) => <Stripes key={a} a={a} b={b} kind="dash" />),
  13: () => [[807, 35, 3], [848, 32, 5], [885, 31, 3], [1002, 22, 5], [1038, 34, 3], [1076, 35, 3], [1116, 28, 5], [1154, 32, 5], [1230, 32, 3], [1347, 22, 5], [1384, 34, 3], [1422, 34, 3], [1463, 31, 5], [1501, 32, 5], [1575, 32, 3], [1614, 35, 3], [1652, 75, 3], [1731, 32, 5]]
    .map(([x, w, s], i) => <Bursts key={x} a={px(x)} w={w} step={s} seed={i + 1} />),
  14: () => sectionClips((k, last) => <MidiClip key={k} a={k} b={k + 1} cut={last ? 5 : 0} text="..2" dim={last} art="melody" />, 2, 25, [4, 7, 9, 11, 13, 16, 18, 20, 22]),
  15: () => <AutoClip text="Insert 17 – EQ 波段 1 (低频) 水平" c="#7b4d67" body="#2e3c45" line="M0 20h43V10h959"><g stroke="#d9b3c8"><path d="M0 20h43V10h959" strokeWidth="2" /><circle cx="43" cy="10" r="4" /><circle cx="43" cy="20" r="4" /><circle cx="22" cy="20" r="3" /><circle cx="0" cy="20" r="4" /><circle cx="524" cy="10" r="3" /><circle cx="1001" cy="10" r="4" /></g></AutoClip>,
  16: () => Array.from({ length: 24 }, (_, k) => <Hit key={k} x={ux(k + 1) - 5} w={5} c="#506b54" f="#aec9ba" shape="M5 19v15l-3-2-2-5v-1l2-5z" />),
  17: () => SECT.map(([a, b]) => <Stripes key={a} a={a} b={b} kind="dash" />),
  19: () => <>
    <MidiClip a={3} b={4} cut={1} text="样.." art="arp" />
    {[7, 8, 12, 16, 17, 21].map((k) => <MidiClip key={k} a={k} b={k + 1} cut={[8, 12, 17, 21].includes(k) ? 5 : 0} text="..1" dim={[8, 12, 17, 21].includes(k)} art="lead" />)}
    <MidiClip a={9} b={11} text="样式 9" art="arp" /><MidiClip a={18} b={20} text="样式 9" art="arp" /><MidiClip a={22} b={23} text="样.." art="arp" />
  </>,
  20: () => <AutoClip text="Insert 10 – Volume" c="#477a79" body="#33474f" line="M0 5h120v1h38v-1h693v1h38v-1h113" />,
  21: () => sectionClips((k, last) => <MidiClip key={k} a={k} b={k + 1} cut={last ? 5 : 0} text={[10, 12, 17, 25].includes(k) ? "" : last ? "样" : "样.."} dim={last} art="chords" light />),
  23: () => Array.from({ length: 26 }, (_, k) => <Hit key={k} x={ux(k + 1) - 11} w={11} c="#5b6747" f="#bcc9b4" icon shape="M11 19v16l-2-4-3-3-6-1v-1l6-1 3-2z" />),
  24: () => sectionClips((k, last) => <MidiClip key={k} a={k} b={k + 1} cut={last ? 5 : 0} text={[10, 12, 17, 25].includes(k) ? "" : last ? "样" : "样.."} dim={last} art="bass" />),
  25: () => <AutoClip text="Param. EQ 2 – Mix level" c="#4c5484" body="#2e3c45" line="M0 3h44" />,
};

const Grid = () => {
  let lines = "", bands = "";
  for (let i = 0; i < 160; i++) { lines += `M${Math.round(i * 19.2)} 0h1v1600h-1z`; if (i % 8 < 4) bands += `M${Math.round(i * 19.2)} 0h19v1600h-19z`; }
  return <GridArt width="3000" height="1600"><path d={bands} fill="#334652" /><path d={lines} fill="#192831" /></GridArt>;
};
const MapArt = () => {
  let dark = "", mid = "";
  for (let i = 0; i < 250; i++) dark += `M${i * 4} 2h1v3h-1z`;
  for (let i = 0; i < 13; i++) mid += `M${30 + i * 76} 9h18v2H${30 + i * 76}zM${36 + i * 76} 14h12v2H${36 + i * 76}z`;
  return <svg width="1007" height="17"><path fill="#64777d" d="M0 0h1007v17H0z" /><path fill="#788d92" d="M0 0h1007v2H0z" /><path fill="#7b768c" d="M0 5h1007v1H0zM0 13h1007v1H0z" /><path fill="#647893" d="M0 9h1007v3H0z" /><path fill="#4f6068" d={dark} /><path fill="#84929a" d={mid} /></svg>;
};

const TOOLS = [
  ["绘制", "#e8ad45", <><path d="M2 3l3-2 8 8-1 4-4-1-7-7z" strokeWidth="1.500" /><path d="M4 4l7 7" strokeWidth="1.500" /></>],
  ["刷子", 0, <F d="M4 0l2 3 2-2 1 4 5 5-1 4-3-1-4-5-3-1 2 4-5 2z" />],
  ["删除", 0, <><circle cx="7" cy="7" r="5.500" strokeWidth="1.500" /><path d="M3 11l8-8" strokeWidth="1.500" /></>],
  ["静音", 0, <><F d="M0 5h3l4-4v12L3 9H0z" /><path d="M9 5l4 4M13 5l-4 4" strokeWidth="1.500" /></>],
  ["滑动", 0, <F d="M0 7l5-5v3h4V2l5 5-5 5V9H5v3z" />],
  ["切片", 0, <><F d="M0 2h6v9z" opacity=".7" /><F d="M7 2h5l2 3v8h-4z" /></>],
  ["选择", 0, <path d="M1 5V1h4M9 1h4v4M13 9v4H9M5 13H1V9" strokeWidth="1.500" />],
  ["缩放", 0, <><circle cx="6" cy="6" r="5" strokeWidth="1.500" /><path d="M9.500 9.500l4 4" strokeWidth="2" /></>],
  ["播放", 0, <><F d="M0 5h3l4-4v12L3 9H0z" /><path d="M9.500 3v8M12.500 3v8" strokeWidth="1.500" /></>],
];
const OFF = [4, 18, 22];

const PlaylistWindow = () => (
  <Playlist>
    <PlTitle>
      <Ghost $w={16} aria-label="菜单"><Tri /></Ghost>
      <Ghost $w={24} $c="#5fdc9a" aria-label="吸附"><MagnetIcon /></Ghost>
      <Tools>{TOOLS.map(([n, c, g]) => <Ghost key={n} $w={20} $c={c || "#dbe3e6"} aria-label={n}><Svg w={14}>{g}</Svg></Ghost>)}</Tools>
      <Speaker />
      <Crumb>播放列表 - Arrangement</Crumb><Svg w={5} h={8}><F d="M0 0l4 4-4 4z" opacity=".4" /></Svg>
      <Crumb>drop_fills 3 #2</Crumb><Svg w={5} h={8}><F d="M0 0l4 4-4 4z" opacity=".4" /></Svg>
      <Space />
      <Ghost $w={19} aria-label="最小化"><Svg w={9} h={9}><path d="M1 3h7" /></Svg></Ghost>
      <Ghost $w={19} aria-label="最大化"><Svg w={9} h={8}><path d="M.5 2h8M.5 1v6.500h8V1" /></Svg></Ghost>
      <Ghost $w={19} aria-label="关闭"><CloseX w={9} /></Ghost>
    </PlTitle>
    <Split>
      <Picker>
        <Tabs><Ghost $w={46} $c="#e3eaed" aria-label="样式"><PianoIcon /></Ghost><Ghost $w={46} aria-label="音频"><WaveIcon /></Ghost><Ghost $w={47} aria-label="自动化"><LineIcon /></Ghost></Tabs>
        <PickBox>
          <PickList>
            {Array.from({ length: 16 }, (_, i) => (
              <PickItem key={i}><Svg w={133} h={26}><F d={pickArt(i + 1)} /></Svg><KeysIcon /><span>样式 {i + 1}</span>
                {i === 15 && <Current><Svg w={8} h={12}><path d="M0 0l7 6-7 6z" fill="#e0405a" stroke="#2a1a20" strokeWidth="1" /></Svg></Current>}
              </PickItem>
            ))}
          </PickList>
          <PickScroll />
        </PickBox>
        <PickFoot><Ghost aria-label="添加样式"><Svg w={8} h={8}><path d="M4 0v8M0 4h8" /></Svg></Ghost></PickFoot>
      </Picker>
      <Arr>
        <ArrTop>
          <Corner>
            <Ghost $w={30} aria-label="添加轨道"><Svg w={9} h={9}><path d="M4.500 0v9M0 4.500h9" /></Svg></Ghost>
            <CornerGrid>
              <button aria-label="音频"><WaveIcon w={19} /></button><button aria-label="自动化"><LineIcon /></button><button aria-label="钢琴"><PianoIcon /></button>
              <button aria-label="清除"><CloseX w={9} /></button><button aria-label="斜线"><Svg w={9} h={9} strokeWidth="1"><path d="M1 0v8L8 1" /></Svg></button><button aria-label="伸缩"><Svg w={10} h={8} strokeWidth="1.500"><path d="M3 1L0 4l3 3M7 1l3 3-3 3" /></Svg></button>
            </CornerGrid>
          </Corner>
          <Head>
            <MapRow><Sq aria-label="左"><Chevron d="left" /></Sq><MiniMap><MapArt /></MiniMap><Sq aria-label="右"><Chevron d="right" /></Sq></MapRow>
            <Ruler>
              {Array.from({ length: 30 }, (_, k) => <span key={k} style={{ left: Math.round(38.4 * k) }}>{k * 8 + 1}</span>)}
              <Svg w={14} h={10}><path d="M1 1h12v3l-6 5-6-5z" fill="#a5e23c" stroke="#4e7a22" strokeWidth="1" /></Svg>
            </Ruler>
          </Head>
          <div><Sq $h={20} aria-label="选项"><Svg w={4} h={4}><circle cx="2" cy="2" r="1" /></Svg></Sq><Sq $h={20} aria-label="上"><Chevron /></Sq></div>
        </ArrTop>
        <ArrBody>
          <Tracks>
            <Grid />
            {Array.from({ length: 24 }, (_, i) => i + 2).map((n) => (
              <Track key={n}>
                <TrackHead $off={OFF.includes(n)}>Track {n}<Led aria-label={`Track ${n}`} /></TrackHead>
                <Gap $sel={n === 4} />
                <Lane>{lanes[n] ? lanes[n]() : null}</Lane>
              </Track>
            ))}
            <PlayLine />
          </Tracks>
          <VScroll><Sq $h={34} aria-label="滚动" /><Sq $h={19} aria-label="下"><Chevron d="down" /></Sq></VScroll>
        </ArrBody>
      </Arr>
    </Split>
  </Playlist>
);

export default function App() {
  return (
    <Shell>
      <Global />
      <Top />
      <Work><ChannelRack /><PlaylistWindow /></Work>
      <Mark>www.flpdown.com</Mark>
    </Shell>
  );
}
